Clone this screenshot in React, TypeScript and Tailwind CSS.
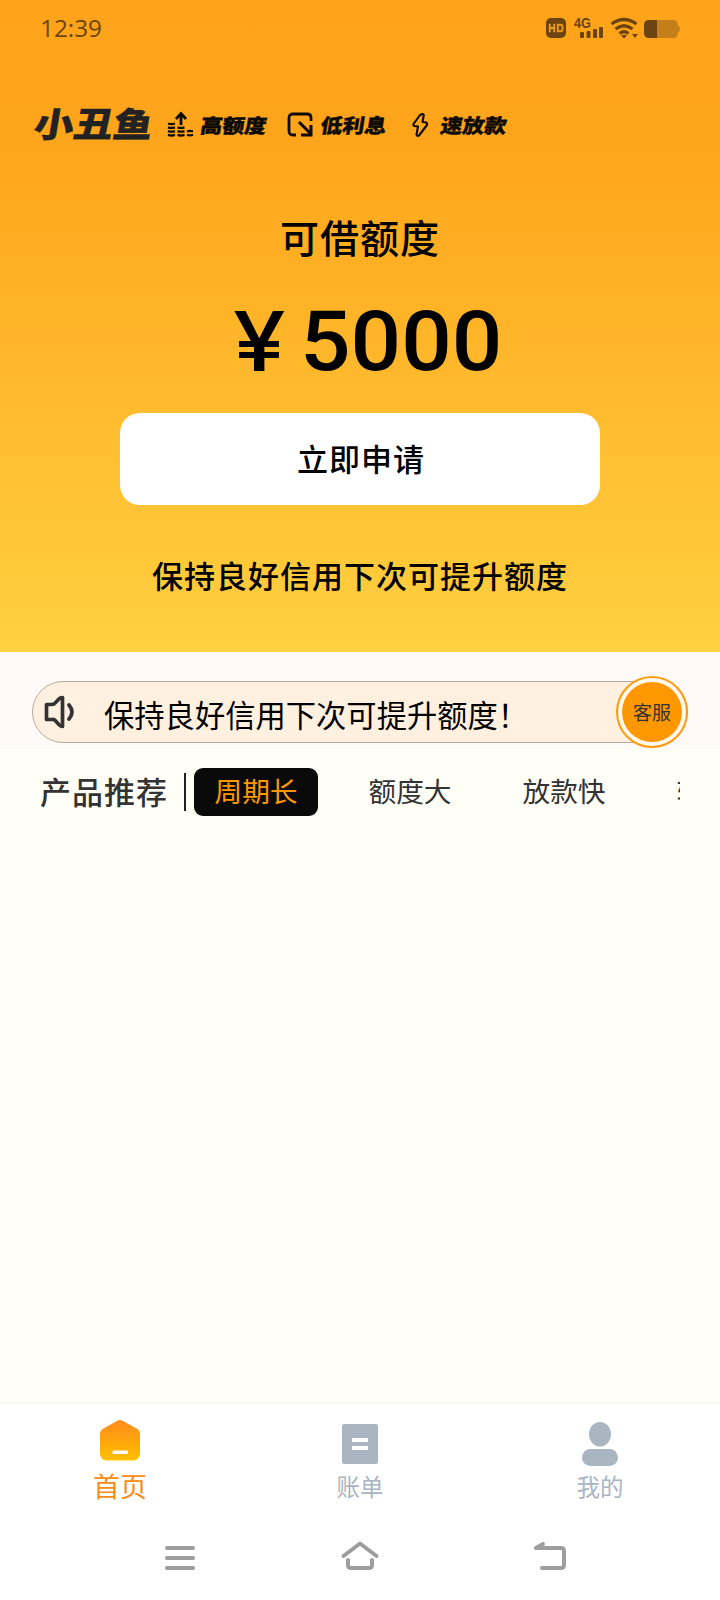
import type { ReactNode } from "react";

const CJK = "font-['Noto_Sans_CJK_SC',sans-serif]";

function StatusBar() {
  return (
    <div className="flex h-[56px] items-center justify-between pl-[40px] pr-[40px] text-[#6b4410]">
      <span className="font-['Open_Sans',sans-serif] text-[24.3px] leading-none">12:39</span>
      <svg width="136" height="24" viewBox="0 0 136 24" fill="#6b4410">
        <rect x="2" y="2" width="20" height="20" rx="5" />
        <path d="M5.800 7.800v8.400M5.800 12h4.400M10.200 7.800v8.400M13.800 8.700h2.400q2.300 0 2.300 2v2.600q0 2-2.300 2h-2.400z" fill="none" stroke="#f09a1a" strokeWidth="1.900" />
        <text x="30" y="12" textLength="17" lengthAdjust="spacingAndGlyphs" className="font-['Liberation_Sans',sans-serif] text-[14px] font-bold">4G</text>
        <rect x="36" y="16" width="4" height="6" rx="1" />
        <rect x="42.500" y="15" width="4" height="7" rx="1" />
        <rect x="49" y="13" width="4" height="9" rx="1" />
        <rect x="55" y="11" width="4" height="11" rx="1" />
        <g fill="none" stroke="#6b4410" strokeWidth="3.300">
          <path d="M67.500 8q12.500-9 25 0M71.500 13q8.500-6.500 17 0M75.500 17.500q4.500-3.600 9 0" />
        </g>
        <path d="M77 19.500q3-1.500 6 0l-3 3zM88 18h6l-3 4z" />
        <path d="M112 4h17q5 0 5 5v.5q2 .5 2 3.500t-2 3.500v.5q0 5-5 5h-17z" fill="#c57f1a" />
        <path d="M113 4h-8q-5 0-5 5v8q0 5 5 5h8z" />
      </svg>
    </div>
  );
}

function Feature({ icon, label, className }: { icon: ReactNode; label: string; className: string }) {
  return (
    <div className={`flex items-center ${className}`}>
      {icon}
      <span className="skew-x-[-8deg] scale-y-[0.9] text-[22px] font-black leading-none [-webkit-text-stroke:0.4px_#0d0b08]">{label}</span>
    </div>
  );
}

function BrandRow() {
  return (
    <div className="mt-[44px] flex h-[48px] items-center pl-[35px] text-[#0d0b08]">
      <span className="mb-[4px] w-[132px] origin-left skew-x-[-8deg] scale-y-[0.86] whitespace-nowrap text-[39.5px] font-black leading-none text-[#222] [-webkit-text-stroke:0.5px_#222]">小丑鱼</span>
      <Feature
        label="高额度"
        className="w-[120px] gap-[7px]"
        icon={
          <svg width="27" height="26" viewBox="0 0 27 26" fill="none" stroke="#0d0b08" strokeWidth="2.300">
            <path d="M14 14V3M9 8l5-5.500L19 8" strokeWidth="2.800" />
            <path d="M1 12.500q3.500 1.200 7 0M1 16.300q3.500 1.200 7 0M1 20.100q3.500 1.200 7 0M1 23.900q3.500 1.200 7 0M10.500 16.300q3.500 1.200 7 0M10.500 20.100q3.500 1.200 7 0M10.500 23.900q3.500 1.200 7 0M20 20.300q3-1 6 0M20 23.700q3 1.200 6 0" />
          </svg>
        }
      />
      <Feature
        label="低利息"
        className="w-[123px] gap-[8px]"
        icon={
          <svg className="mt-[2px]" width="26" height="26" viewBox="0 0 26 26" fill="none" stroke="#0d0b08" strokeWidth="2.800">
            <path d="M9 23H6q-4 0-4-4V6q0-4 4-4h14q4 0 4 4v3" />
            <path d="M12 10l11 11M24 13v10H14" strokeWidth="3" />
          </svg>
        }
      />
      <Feature
        label="速放款"
        className="gap-[11px]"
        icon={
          <svg className="mt-[2px]" width="20" height="26" viewBox="0 0 20 26" fill="none" stroke="#0d0b08" strokeWidth="2.100" strokeLinejoin="round">
            <path d="M12.500 2L10 3 3.500 12Q3 13.500 4.500 14L8 14.500 6.500 22.500Q7 24.500 9 23.500L17 13Q17.500 11 16 10.500L12.500 10 13.800 3Q13.500 1.800 12.500 2z" />
          </svg>
        }
      />
    </div>
  );
}

function Hero() {
  return (
    <section className="flex h-[652px] flex-col bg-[linear-gradient(180deg,#ffa31a_0%,#ffa51b_22%,#ffd040_100%)]">
      <StatusBar />
      <BrandRow />
      <div className="flex flex-col items-center text-black">
        <h1 className="mt-[63px] text-[39px] font-medium leading-[50px] tracking-[1px]">可借额度</h1>
        <div className="mt-[39px] flex h-[84px] w-full items-center pl-[233px]">
          <span className="w-[67px] origin-left font-['Inter',sans-serif] text-[82px] font-medium leading-none"><span className="inline-block origin-left scale-x-[1.15]">¥</span></span>
          <span className="origin-left scale-x-[1.06] font-['Roboto',sans-serif] text-[84px] font-medium leading-none">5000</span>
        </div>
        <button className="mt-[29px] h-[92px] w-[480px] rounded-[20px] bg-white pb-[2px] pl-[2px] text-[31px] font-medium tracking-[1px]">立即申请</button>
        <p className="mt-[47px] text-[31px] font-medium leading-[46px] tracking-[1px]">保持良好信用下次可提升额度</p>
      </div>
    </section>
  );
}

function NoticeBar() {
  return (
    <section className="flex h-[97px] items-center bg-[#fff9f8] px-[32px] pt-[23px]">
      <div className="relative flex h-[62px] w-full items-center rounded-full border border-[#b9aba0] bg-[#fff0df] pl-[11px]">
        <svg width="32" height="34" viewBox="0 0 32 34" fill="none" stroke="#333" strokeWidth="3.700" strokeLinejoin="round" strokeLinecap="round">
          <path d="M18.500 2.500v29q-3-.5-5.500-4T8 24.500H2.500v-15H8q2.500 0 5-3.500t5.500-3.500z" />
          <path d="M25 10q6 7 0 14" />
        </svg>
        <span className="ml-[28px] mt-[5px] text-[30.3px] leading-none text-black">保持良好信用下次可提升额度！</span>
        <div className="absolute right-[-1px] top-[-6px] flex size-[72px] items-center justify-center rounded-full border-2 border-[#ff9a0a] bg-[#fff9f0]">
          <div className="flex size-[60px] shrink-0 items-center justify-center rounded-full bg-[#ff9800] text-[19px] text-[#333]">客服</div>
        </div>
      </div>
    </section>
  );
}

function ProductTabs() {
  const tabs = ["额度大", "放款快", "轻松借"];
  return (
    <div className="mr-[40px] mt-[19px] flex h-[48px] items-center overflow-hidden whitespace-nowrap pl-[40px] text-[#333]">
      <h2 className="shrink-0 pb-[3px] text-[31px] font-medium leading-none tracking-[1px]">产品推荐</h2>
      <div className="ml-[16px] h-[38px] w-[2px] shrink-0 bg-[#222]" />
      <div className="ml-[8px] flex h-[48px] w-[124px] shrink-0 items-center justify-center rounded-[9px] bg-[#0a0a0a] pb-[3px] text-[27.7px] leading-none text-[#ff9800]">周期长</div>
      <div className="ml-[30px] flex gap-[30px] pb-[3px]">
        {tabs.map((t) => (
          <div key={t} className="flex w-[124px] shrink-0 justify-center text-[27.7px] leading-none">{t}</div>
        ))}
      </div>
    </div>
  );
}

function BottomNav() {
  return (
    <nav className="grid h-[98px] grid-cols-3 border-t-2 border-[#f8f8f6] bg-white">
      <div className="flex flex-col items-center pt-[15px]">
        <svg width="42" height="42" viewBox="0 0 42 42">
          <defs>
            <linearGradient id="home" x1="0" y1="0" x2="0" y2="1">
              <stop offset="0" stopColor="#ff8a1c" />
              <stop offset="1" stopColor="#ffc000" />
            </linearGradient>
          </defs>
          <path d="M18.500 1.700q2.500-1.400 5 0L38 9.800q3 2 3 5.500V34q0 7.500-7.500 7.500h-25Q1 41.500 1 34V15.300q0-3.500 3-5.500z" fill="url(#home)" />
          <rect x="13.500" y="31.500" width="15.500" height="3.500" rx="1" fill="#fff" />
        </svg>
        <span className="mt-[11px] text-[27px] leading-none text-[#fa8c16]">首页</span>
      </div>
      <div className="flex flex-col items-center pt-[20px] text-[#a9b5c1]">
        <svg width="36" height="40" viewBox="0 0 36 40">
          <rect width="36" height="40" rx="2" fill="#a9b5c1" />
          <path d="M10 14h16v4H10zM10 22h16v4H10z" fill="#fff" />
        </svg>
        <span className="mt-[11px] text-[23.5px] leading-none">账单</span>
      </div>
      <div className="flex flex-col items-center pt-[18px] text-[#a9b5c1]">
        <svg width="36" height="44" viewBox="0 0 36 44" fill="#a9b5c1">
          <ellipse cx="18" cy="12.300" rx="11" ry="12.300" />
          <rect y="27" width="36" height="17" rx="8.500" />
        </svg>
        <span className="mt-[9px] text-[23.5px] leading-none">我的</span>
      </div>
    </nav>
  );
}

function SystemNav() {
  return (
    <div className="flex h-[100px] items-center bg-white pl-[160px] pt-[14px]">
      <svg width="40" height="34" viewBox="0 0 40 34" stroke="#9e9e9e" strokeWidth="4" strokeLinecap="round">
        <path d="M7 8h26M7 18h26M7 28h26" />
      </svg>
      <svg className="ml-[140px]" width="40" height="34" viewBox="0 0 40 34" fill="none" stroke="#9e9e9e" strokeWidth="4" strokeLinecap="round" strokeLinejoin="round">
        <path d="M3.500 16L20 3.500 36.500 16M8 20v5q0 3 3 3h18q3 0 3-3v-5" />
      </svg>
      <svg className="ml-[150px]" width="40" height="34" viewBox="0 0 40 34" fill="none" stroke="#9e9e9e" strokeWidth="4" strokeLinecap="round" strokeLinejoin="round">
        <path d="M13 4L6 8h25q3 0 3 3v14q0 3-3 3H12" />
      </svg>
    </div>
  );
}

export default function App() {
  return (
    <main className={`flex h-[1600px] w-[720px] flex-col overflow-hidden bg-[#fffff8] ${CJK}`}>
      <Hero />
      <NoticeBar />
      <ProductTabs />
      <div className="flex-1" />
      <BottomNav />
      <SystemNav />
    </main>
  );
}
